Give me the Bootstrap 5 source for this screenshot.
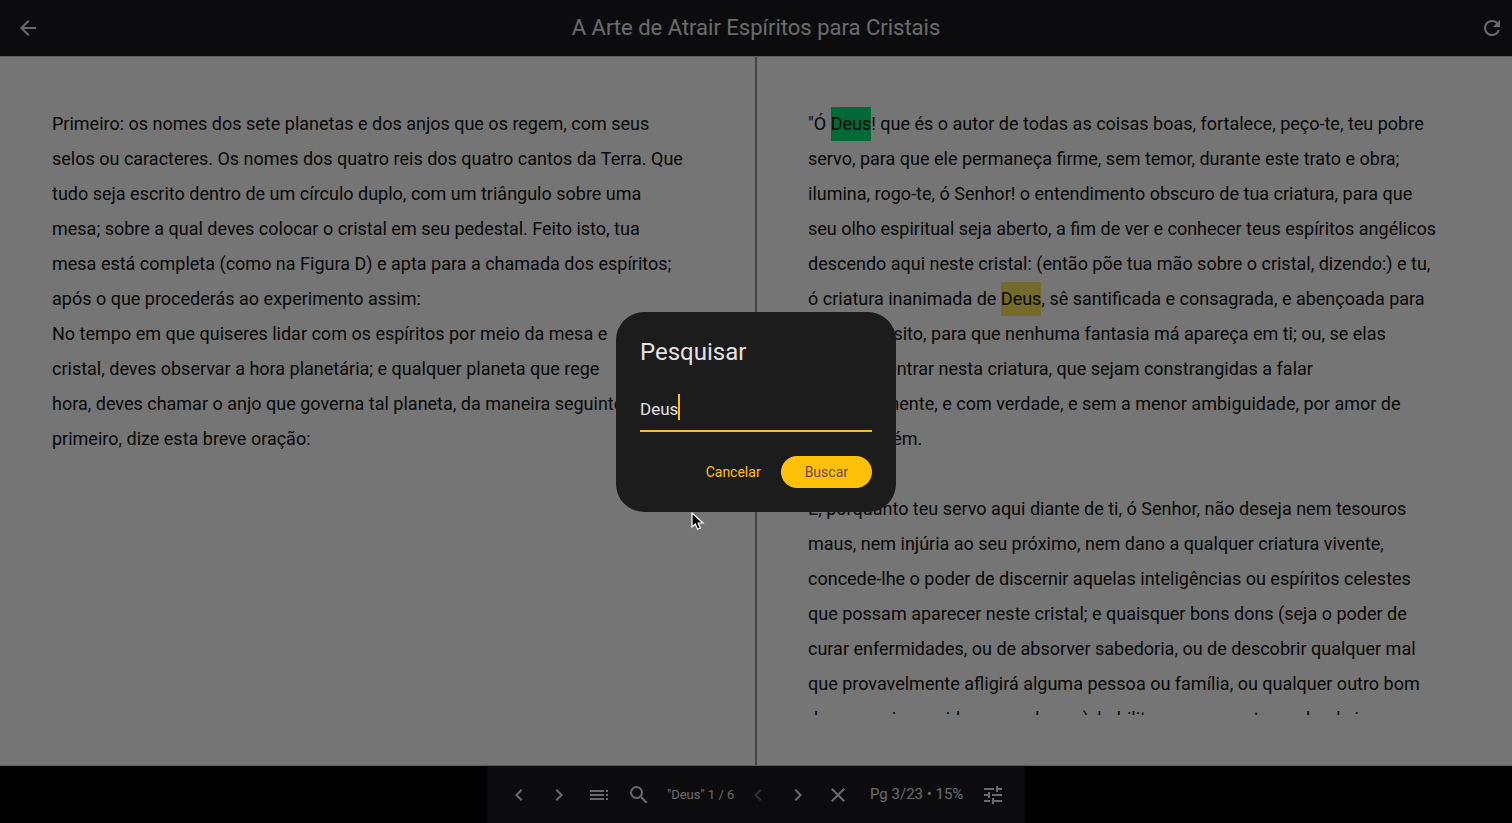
<!DOCTYPE html>
<html lang="pt-BR">
<head>
<meta charset="utf-8">
<meta name="viewport" content="width=device-width, initial-scale=1">
<title>A Arte de Atrair Espíritos para Cristais</title>
<link href="https://cdn.jsdelivr.net/npm/bootstrap@5.3.0/dist/css/bootstrap.min.css" rel="stylesheet">
<script src="https://cdn.jsdelivr.net/npm/bootstrap@5.3.0/dist/js/bootstrap.bundle.min.js" defer></script>
<style>
body { font-family: Roboto, sans-serif; background: #000; }
svg { fill: currentColor; display: block; }
.top-bar, .tool-bar { background: #1c1c20; color: #e6e6e6; }
.top-bar { height: 56px; }
.top-bar h1 { font-size: 22px; line-height: 28px; font-weight: 400; }
.icon-btn { width: 40px; height: 40px; color: inherit; border: 0; }
.icon-btn:disabled { color: #6e6e72; border: 0; opacity: 1; }
.reader { background: #fff; color: #111; border-top: 1px solid #ccc; border-bottom: 1px solid #ccc; min-height: 0; }
.leaf { padding: 49px 0 50px 52px; min-width: 0; border-right: 1px solid #999; }
.leaf + .leaf { border-right: 0; border-left: 1px solid #999; padding-left: 51px; }
.leaf-text { font-size: 18px; line-height: 35px; white-space: nowrap; height: 100%; overflow: hidden; }
.hit { background: #fde65a; color: inherit; padding: 6px 0 7px; }
.hit-current { background: #00e676; }
.tool-bar { height: 57px; padding: 0 12px; }
.hits { font-size: 13px; width: 79px; padding-left: 8px; }
.place { font-size: 15px; width: 115px; padding-left: 12px; }
.modal-backdrop { --bs-backdrop-opacity: .54; }
.search-dialog { --bs-modal-width: 280px; --bs-modal-margin: 0px; }
.search-dialog .modal-content { background: #1c1c1c; color: #e6e1e5; border: 0; border-radius: 28px; padding: 24px; }
.search-dialog h2 { font-size: 24px; line-height: 32px; font-weight: 400; }
.search-input { background: none; color: #e6e1e5; border: 0; border-bottom: 2px solid #ffc107; border-radius: 0; font-size: 17px; height: 48px; padding: 4px 0 0; outline: 0; caret-color: transparent; }
.caret { left: 38px; top: 10px; width: 2px; height: 26px; background: #ffc107; }
.btn-text, .btn-fill { font-size: 14px; line-height: 20px; height: 32px; padding: 0 12px; color: #ffc107; border: 0; }
.btn-fill, .btn-fill:hover { background: #ffc107; color: #6b4a4a; padding: 0 24px; }
.pointer { left: 691px; top: 512px; z-index: 1080; }
</style>
</head>
<body class="vh-100 d-flex flex-column overflow-hidden">
<header class="top-bar d-flex flex-shrink-0 align-items-center justify-content-between">
  <div class="ps-2"><button class="btn icon-btn p-2" aria-label="Voltar"><svg width="24" height="24" viewBox="0 0 24 24"><path d="M20 11H7.830l5.590-5.590L12 4l-8 8 8 8 1.410-1.410L7.830 13H20z"/></svg></button></div>
  <h1 class="m-0">A Arte de Atrair Espíritos para Cristais</h1>
  <div class="ps-2"><button class="btn icon-btn p-2" aria-label="Recarregar"><svg width="24" height="24" viewBox="0 0 24 24"><path d="M17.650 6.350A7.960 7.960 0 0 0 12 4a8 8 0 1 0 7.730 10h-2.080A6 6 0 1 1 12 6c1.660 0 3.140.690 4.220 1.780L13 11h7V4z"/></svg></button></div>
</header>
<main class="reader d-flex flex-fill">
  <section class="leaf w-50"><div class="leaf-text">Primeiro: os nomes dos sete planetas e dos anjos que os regem, com seus<br>selos ou caracteres. Os nomes dos quatro reis dos quatro cantos da Terra. Que<br>tudo seja escrito dentro de um círculo duplo, com um triângulo sobre uma<br>mesa; sobre a qual deves colocar o cristal em seu pedestal. Feito isto, tua<br>mesa está completa (como na Figura D) e apta para a chamada dos espíritos;<br>após o que procederás ao experimento assim:<br>No tempo em que quiseres lidar com os espíritos por meio da mesa e<br>cristal, deves observar a hora planetária; e qualquer planeta que rege<br>hora, deves chamar o anjo que governa tal planeta, da maneira seguinte:<br>primeiro, dize esta breve oração:</div></section>
  <section class="leaf w-50"><div class="leaf-text">"Ó <mark class="hit hit-current">Deus</mark>! que és o autor de todas as coisas boas, fortalece, peço-te, teu pobre<br>servo, para que ele permaneça firme, sem temor, durante este trato e obra;<br>ilumina, rogo-te, ó Senhor! o entendimento obscuro de tua criatura, para que<br>seu olho espiritual seja aberto, a fim de ver e conhecer teus espíritos angélicos<br>descendo aqui neste cristal: (então põe tua mão sobre o cristal, dizendo:) e tu,<br>ó criatura inanimada de <mark class="hit">Deus</mark>, sê santificada e consagrada, e abençoada para<br>este propósito, para que nenhuma fantasia má apareça em ti; ou, se elas<br>quiserem entrar nesta criatura, que sejam constrangidas a falar<br>inteligivelmente, e com verdade, e sem a menor ambiguidade, por amor de<br>Cristo. Amém.<br><br>E, porquanto teu servo aqui diante de ti, ó Senhor, não deseja nem tesouros<br>maus, nem injúria ao seu próximo, nem dano a qualquer criatura vivente,<br>concede-lhe o poder de discernir aquelas inteligências ou espíritos celestes<br>que possam aparecer neste cristal; e quaisquer bons dons (seja o poder de<br>curar enfermidades, ou de absorver sabedoria, ou de descobrir qualquer mal<br>que provavelmente afligirá alguma pessoa ou família, ou qualquer outro bom<br>dom, e mais querido a uma de nos), habilitar-me a ver e ter poder de ir</div></section>
</main>
<footer class="d-flex flex-shrink-0 justify-content-center">
  <nav class="tool-bar d-flex align-items-center" aria-label="Leitura">
    <button class="btn icon-btn p-2" aria-label="Página anterior"><svg width="24" height="24" viewBox="0 0 24 24"><path d="M15.410 7.410 14 6l-6 6 6 6 1.410-1.410L10.830 12z"/></svg></button>
    <button class="btn icon-btn p-2" aria-label="Próxima página"><svg width="24" height="24" viewBox="0 0 24 24"><path d="M10 6 8.590 7.410 13.170 12l-4.580 4.590L10 18l6-6z"/></svg></button>
    <button class="btn icon-btn p-2" aria-label="Sumário"><svg width="24" height="24" viewBox="0 0 24 24"><path d="M3 9h14V7H3zm0 4h14v-2H3zm0 4h14v-2H3zm16 0h2v-2h-2zm0-10v2h2V7zm0 6h2v-2h-2z"/></svg></button>
    <button class="btn icon-btn p-2" aria-label="Pesquisar"><svg width="24" height="24" viewBox="0 0 24 24"><path d="M15.500 14h-.790l-.280-.270A6.470 6.470 0 0 0 16 9.500 6.500 6.500 0 1 0 9.500 16c1.610 0 3.090-.590 4.230-1.570l.270.280v.790l5 4.990L20.490 19zm-6 0a4.500 4.500 0 1 1 0-9 4.500 4.500 0 0 1 0 9z"/></svg></button>
    <span class="hits text-nowrap">"Deus" 1 / 6</span>
    <button class="btn icon-btn p-2" aria-label="Resultado anterior" disabled><svg width="24" height="24" viewBox="0 0 24 24"><path d="M15.410 7.410 14 6l-6 6 6 6 1.410-1.410L10.830 12z"/></svg></button>
    <button class="btn icon-btn p-2" aria-label="Próximo resultado"><svg width="24" height="24" viewBox="0 0 24 24"><path d="M10 6 8.590 7.410 13.170 12l-4.580 4.590L10 18l6-6z"/></svg></button>
    <button class="btn icon-btn p-2" aria-label="Limpar busca"><svg width="24" height="24" viewBox="0 0 24 24"><path d="M19 6.410 17.590 5 12 10.590 6.410 5 5 6.410 10.590 12 5 17.590 6.410 19 12 13.410 17.590 19 19 17.590 13.410 12z"/></svg></button>
    <span class="place text-nowrap">Pg 3/23 • 15%</span>
    <button class="btn icon-btn p-2" aria-label="Ajustes"><svg width="24" height="24" viewBox="0 0 24 24"><path d="M3 17v2h6v-2zM3 5v2h10V5zm10 16v-2h8v-2h-8v-2h-2v6zM7 9v2H3v2h4v2h2V9zm14 4v-2H11v2zm-6-4h2V7h4V5h-4V3h-2z"/></svg></button>
  </nav>
</footer>
<div class="modal-backdrop show"></div>
<div class="modal d-block" role="dialog" aria-modal="true" aria-labelledby="searchTitle">
  <div class="modal-dialog modal-dialog-centered search-dialog mx-auto">
    <form class="modal-content">
      <h2 class="mb-3" id="searchTitle">Pesquisar</h2>
      <div class="position-relative mb-4">
        <input class="search-input w-100" type="text" value="Deus" aria-labelledby="searchTitle">
        <span class="caret position-absolute"></span>
      </div>
      <div class="d-flex justify-content-end gap-2">
        <button type="button" class="btn btn-text">Cancelar</button>
        <button type="button" class="btn btn-fill rounded-pill">Buscar</button>
      </div>
    </form>
  </div>
</div>
<svg class="pointer position-fixed" width="14" height="20" viewBox="0 0 14 20" aria-hidden="true"><path d="M1 1v14l3.300-3 2.200 5.200 2.800-1.200-2.200-5H12z" fill="#000" stroke="#fff" stroke-width="1.200"/></svg>
</body>
</html>
